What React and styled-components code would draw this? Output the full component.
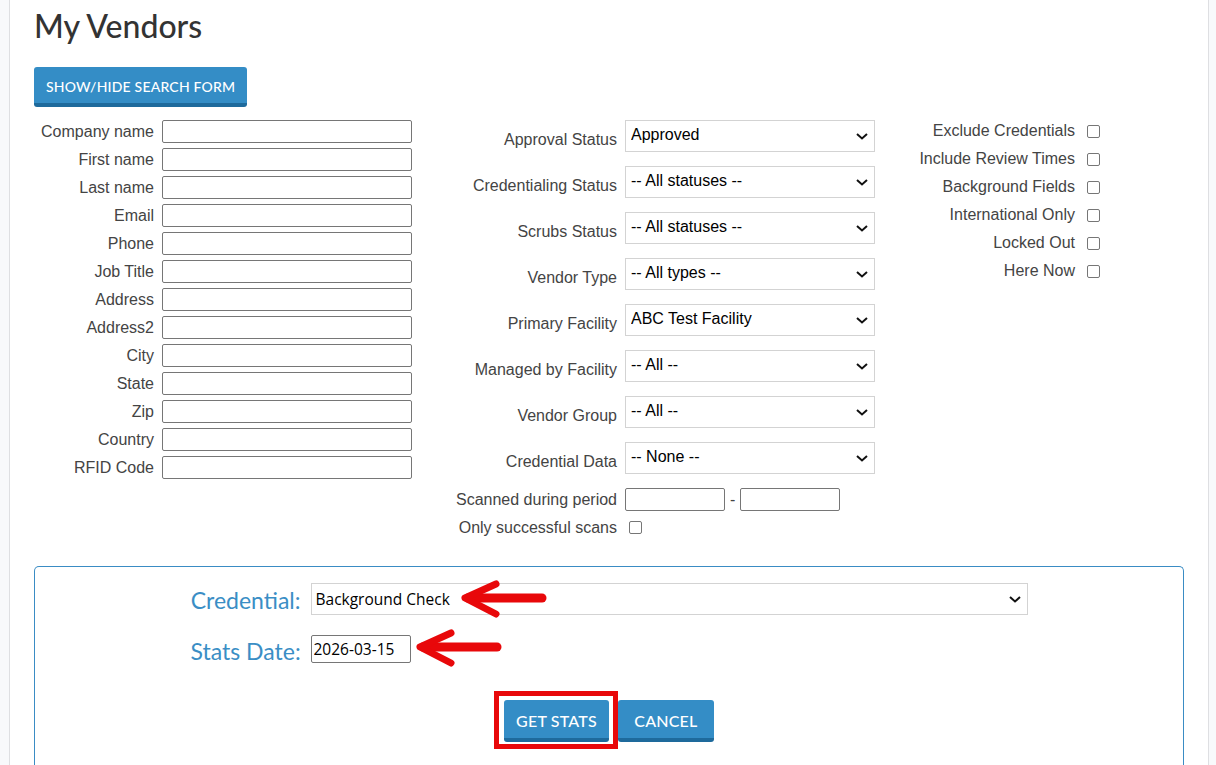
import React from "react";
import styled, { createGlobalStyle } from "styled-components";

const GlobalStyle = createGlobalStyle`
  * { box-sizing: border-box; }
  html, body {
    margin: 0;
    padding: 0;
    background: #f8f9fb;
    font-family: "Liberation Sans", Arial, sans-serif;
  }
`;

const Page = styled.div`
  margin-left: 9px;
  margin-right: 7px;
  min-height: 100vh;
  background: #ffffff;
  border-left: 1px solid #dedfe2;
  border-right: 1px solid #dedfe2;
  padding: 7px 24px 0 24px;
`;

const Title = styled.h1`
  margin: 0;
  font-family: "Lato", "Open Sans", sans-serif;
  font-size: 32px;
  font-weight: 500;
  color: #333333;
  line-height: 38px;
`;

const BlueButton = styled.button`
  font-family: "Lato", "Open Sans", sans-serif;
  font-size: ${(p) => (p.small ? "14px" : "16px")};
  font-weight: 500;
  color: #ffffff;
  background: #348dc6;
  border: none;
  border-bottom: 4px solid #1e6a9c;
  border-radius: 3px;
  height: ${(p) => (p.small ? "40px" : "42px")};
  min-width: ${(p) => p.minWidth || 0}px;
  padding: 2px 12px 0;
  letter-spacing: 0.2px;
  cursor: pointer;
`;

const ToggleRow = styled.div`
  margin-top: 22px;
`;

const SearchForm = styled.div`
  display: grid;
  grid-template-columns: 378px 458px auto;
  column-gap: 5px;
  margin-top: 13px;
`;

const LeftColumn = styled.div`
  display: grid;
  grid-template-columns: 120px 250px;
  column-gap: 8px;
  row-gap: 5px;
  align-content: start;
`;

const Label = styled.label`
  font-size: 16px;
  line-height: 18px;
  color: #444444;
  text-align: right;
  white-space: nowrap;
  align-self: ${(p) => p.align || "center"};
  margin-bottom: ${(p) => (p.align === "end" ? "3px" : "0")};
`;

const TextInput = styled.input`
  height: 23px;
  width: ${(p) => p.width || "250px"};
  border: 1px solid #767676;
  border-radius: 2px;
  padding: 1px 3px;
  font-size: 15px;
  font-family: inherit;
  background: #ffffff;
`;

const MiddleColumn = styled.div`
  display: flex;
  flex-direction: column;
`;

const MiddleRow = styled.div`
  display: grid;
  grid-template-columns: 200px 250px;
  column-gap: 8px;
  min-height: 23px;
  margin-bottom: ${(p) => p.gap ?? 14}px;
`;

const SelectWrap = styled.div`
  position: relative;
  width: ${(p) => p.width || "250px"};
  height: 32px;
`;

const Select = styled.select`
  appearance: none;
  width: 100%;
  height: 100%;
  border: 1px solid #d3d3d3;
  border-radius: 0;
  background: #ffffff;
  color: #000000;
  font-family: ${(p) => (p.alt ? '"Open Sans", "Noto Sans", sans-serif' : '"Liberation Sans", Arial, sans-serif')};
  font-size: ${(p) => (p.alt ? "15.5px" : "16px")};
  padding: ${(p) => (p.alt ? "0 30px 1px 4px" : "0 30px 4px 5px")};
  outline: none;
`;

const Chevron = styled.svg`
  position: absolute;
  right: 7px;
  top: 13px;
  pointer-events: none;
`;

const RangeRow = styled.div`
  display: flex;
  align-items: center;
  gap: 5px;
  font-size: 16px;
  color: #444444;
`;

const Check = styled.input.attrs({ type: "checkbox" })`
  appearance: none;
  width: 13px;
  height: 13px;
  margin: 0 0 0 ${(p) => p.offset || 0}px;
  border: 1px solid #767676;
  border-radius: 2px;
  background: #ffffff;
  align-self: center;
`;

const RightColumn = styled.div`
  display: grid;
  grid-template-columns: 195px 13px;
  column-gap: 12px;
  row-gap: 6px;
  grid-auto-rows: 22px;
  align-content: start;
`;

const Panel = styled.div`
  margin-top: 27px;
  border: 1px solid #3a8cc4;
  border-bottom: none;
  border-radius: 5px 5px 0 0;
  padding: 16px 0 40px;
  width: 1150px;
`;

const StatsBlock = styled.div`
  position: relative;
  width: 837px;
  margin: 0 auto;
  display: grid;
  grid-template-columns: 110px 717px;
  column-gap: 10px;
  row-gap: 20px;
`;

const StatsLabel = styled.label`
  font-family: "Lato", "Open Sans", sans-serif;
  font-size: 23px;
  color: #3a8ec5;
  text-align: right;
  align-self: center;
  white-space: nowrap;
  margin-top: 2px;
`;

const DateInput = styled.input`
  width: 100px;
  height: 28px;
  border: 1px solid #767676;
  border-radius: 2px;
  padding: 1px 2px 2px;
  font-family: "Open Sans", "Noto Sans", sans-serif;
  font-size: 15.5px;
  color: #000000;
`;

const Arrow = styled.svg`
  position: absolute;
  left: ${(p) => p.x}px;
  top: ${(p) => p.y}px;
  pointer-events: none;
`;

const ButtonRow = styled.div`
  display: flex;
  justify-content: center;
  gap: 9px;
  margin-top: 35px;
`;

/* red annotation frame drawn around a button */
const Highlight = styled.div`
  position: relative;
  display: flex;

  &::after {
    content: "";
    position: absolute;
    top: -9px;
    bottom: -7px;
    left: -10px;
    right: -9px;
    border: 5px solid #e8080a;
    pointer-events: none;
  }
`;

const leftFields = [
  "Company name",
  "First name",
  "Last name",
  "Email",
  "Phone",
  "Job Title",
  "Address",
  "Address2",
  "City",
  "State",
  "Zip",
  "Country",
  "RFID Code",
];

const selectFields = [
  ["Approval Status", "Approved"],
  ["Credentialing Status", "-- All statuses --"],
  ["Scrubs Status", "-- All statuses --"],
  ["Vendor Type", "-- All types --"],
  ["Primary Facility", "ABC Test Facility"],
  ["Managed by Facility", "-- All --"],
  ["Vendor Group", "-- All --"],
  ["Credential Data", "-- None --"],
];

const flags = [
  "Exclude Credentials",
  "Include Review Times",
  "Background Fields",
  "International Only",
  "Locked Out",
  "Here Now",
];

function Dropdown({ value, width, alt }) {
  return (
    <SelectWrap width={width}>
      <Select defaultValue={value} alt={alt}>
        <option value={value}>{value}</option>
      </Select>
      <Chevron width="12" height="7" viewBox="0 0 12 7">
        <path d="M1 1l5 4.5L11 1" fill="none" stroke="#111" strokeWidth="2" />
      </Chevron>
    </SelectWrap>
  );
}

function RedArrow({ x, y }) {
  return (
    <Arrow x={x} y={y} width="96" height="46" viewBox="0 0 96 46">
      <g fill="none" stroke="#e8080a" strokeLinecap="round" strokeLinejoin="round">
        <path d="M12 22H86" strokeWidth="9" />
        <path d="M40 8L9 22L40 38" strokeWidth="7" />
      </g>
    </Arrow>
  );
}

export default function App() {
  return (
    <>
      <GlobalStyle />
      <Page>
        <Title>My Vendors</Title>
        <ToggleRow>
          <BlueButton small>SHOW/HIDE SEARCH FORM</BlueButton>
        </ToggleRow>

        <SearchForm>
          <LeftColumn>
            {leftFields.map((name) => (
              <React.Fragment key={name}>
                <Label>{name}</Label>
                <TextInput type="text" />
              </React.Fragment>
            ))}
          </LeftColumn>

          <MiddleColumn>
            {selectFields.map(([name, value]) => (
              <MiddleRow key={name}>
                <Label align="end">{name}</Label>
                <Dropdown value={value} />
              </MiddleRow>
            ))}
            <MiddleRow gap={5}>
              <Label>Scanned during period</Label>
              <RangeRow>
                <TextInput type="text" width="100px" />
                <span>-</span>
                <TextInput type="text" width="100px" />
              </RangeRow>
            </MiddleRow>
            <MiddleRow gap={0}>
              <Label>Only successful scans</Label>
              <Check offset={4} />
            </MiddleRow>
          </MiddleColumn>

          <RightColumn>
            {flags.map((name) => (
              <React.Fragment key={name}>
                <Label>{name}</Label>
                <Check />
              </React.Fragment>
            ))}
          </RightColumn>
        </SearchForm>

        <Panel>
          <StatsBlock>
            <StatsLabel>Credential:</StatsLabel>
            <Dropdown value="Background Check" width="717px" alt />
            <StatsLabel>Stats Date:</StatsLabel>
            <div>
              <DateInput type="text" defaultValue="2026-03-15" />
            </div>
            <RedArrow x={265} y={-7} />
            <RedArrow x={220} y={42} />
          </StatsBlock>
          <ButtonRow>
            <Highlight>
              <BlueButton>GET STATS</BlueButton>
            </Highlight>
            <BlueButton minWidth={96}>CANCEL</BlueButton>
          </ButtonRow>
        </Panel>
      </Page>
    </>
  );
}
